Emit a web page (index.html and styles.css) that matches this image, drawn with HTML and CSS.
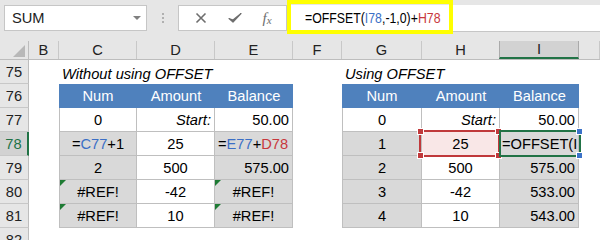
FILE: index.html
```html
<!DOCTYPE html>
<html lang="en">

<head>
    <meta charset="UTF-8" />
    <title>OFFSET running balance</title>
    <link rel="stylesheet" href="styles.css">
</head>

<body>
    <div class="topbar">
        <div class="namebox">
            <span>SUM</span>
            <span class="caret"></span>
        </div>
        <div class="grip"><i></i><i></i><i></i></div>
        <div class="fbtns">
            <svg width="12" height="12" viewBox="0 0 12 12"><path d="M1.5 1.5 L10.5 10.5 M10.5 1.5 L1.5 10.5" stroke="#6e6e6e" stroke-width="1.6" fill="none" /></svg>
            <svg width="14" height="12" viewBox="0 0 14 12"><path d="M1 6.5 L5 10 L13 1.5 L5 8 Z" fill="#6e6e6e" stroke="#6e6e6e" stroke-width="1.2" stroke-linejoin="round" /></svg>
            <span class="fx">f<sub>x</sub></span>
        </div>
        <div class="fbar">
            <span class="ftext">=OFFSET(<b class="ref-b">I78</b>,-1,0)+<b class="ref-r">H78</b></span>
            <div class="mark"></div>
        </div>
    </div>

    <div class="sheet">
        <div class="row head">
            <div class="corner"><span class="tri"></span></div>
            <div class="ch">B</div>
            <div class="ch">C</div>
            <div class="ch">D</div>
            <div class="ch">E</div>
            <div class="ch">F</div>
            <div class="ch">G</div>
            <div class="ch">H</div>
            <div class="ch sel">I</div>
            <div class="ch"></div>
        </div>

        <div class="row">
            <div class="rh">75</div>
            <div class="c"></div>
            <div class="c title">Without using OFFSET</div>
            <div class="c"></div>
            <div class="c"></div>
            <div class="c"></div>
            <div class="c title">Using OFFSET</div>
            <div class="c"></div>
            <div class="c"></div>
            <div class="c"></div>
        </div>

        <div class="row">
            <div class="rh">76</div>
            <div class="c"></div>
            <div class="c th">Num</div>
            <div class="c th">Amount</div>
            <div class="c th">Balance</div>
            <div class="c"></div>
            <div class="c th">Num</div>
            <div class="c th">Amount</div>
            <div class="c th">Balance</div>
            <div class="c"></div>
        </div>

        <div class="row">
            <div class="rh">77</div>
            <div class="c"></div>
            <div class="c t first mid">0</div>
            <div class="c t end"><em>Start:</em></div>
            <div class="c t end">50.00</div>
            <div class="c"></div>
            <div class="c t first mid">0</div>
            <div class="c t end"><em>Start:</em></div>
            <div class="c t end">50.00</div>
            <div class="c"></div>
        </div>

        <div class="row">
            <div class="rh active">78</div>
            <div class="c"></div>
            <div class="c t first g mid">=<span class="ref-b">C77</span>+1</div>
            <div class="c t mid">25</div>
            <div class="c t g">=<span class="ref-b">E77</span>+<span class="ref-r">D78</span></div>
            <div class="c"></div>
            <div class="c t first g mid">1</div>
            <div class="c t mid pick">25<span class="box-red"><i class="h tl"></i><i class="h tr"></i><i class="h bl"></i><i class="h br"></i></span></div>
            <div class="c t g editing">=OFFSET(I<span class="box-green"><i class="h tr"></i><i class="h br"></i></span></div>
            <div class="c"></div>
        </div>

        <div class="row">
            <div class="rh">79</div>
            <div class="c"></div>
            <div class="c t first g mid">2</div>
            <div class="c t mid">500</div>
            <div class="c t g end">575.00</div>
            <div class="c"></div>
            <div class="c t first g mid">2</div>
            <div class="c t mid">500</div>
            <div class="c t g end">575.00</div>
            <div class="c"></div>
        </div>

        <div class="row">
            <div class="rh">80</div>
            <div class="c"></div>
            <div class="c t first g mid err">#REF!</div>
            <div class="c t mid">-42</div>
            <div class="c t g mid err">#REF!</div>
            <div class="c"></div>
            <div class="c t first g mid">3</div>
            <div class="c t mid">-42</div>
            <div class="c t g end">533.00</div>
            <div class="c"></div>
        </div>

        <div class="row">
            <div class="rh">81</div>
            <div class="c"></div>
            <div class="c t first g mid err">#REF!</div>
            <div class="c t mid">10</div>
            <div class="c t g mid err">#REF!</div>
            <div class="c"></div>
            <div class="c t first g mid">4</div>
            <div class="c t mid">10</div>
            <div class="c t g end">543.00</div>
            <div class="c"></div>
        </div>

        <div class="row">
            <div class="rh">82</div>
        </div>
    </div>
</body>
</html>
```

FILE: styles.css
```css
body {
    margin: 0;
    width: 600px;
    height: 240px;
    overflow: hidden;
    font-family: "Liberation Sans", Arial, sans-serif;
    font-size: 14.67px;
    color: #000;
    background: #fff;
}

/* formula bar */

.topbar {
    display: flex;
    align-items: flex-start;
    height: 41px;
    padding-top: 5px;
    box-sizing: border-box;
    background: #e6e6e6;
}

.namebox {
    display: flex;
    align-items: center;
    justify-content: space-between;
    width: 143px;
    height: 26px;
    margin-left: 4px;
    padding: 0 5px 0 7px;
    box-sizing: border-box;
    background: #fff;
    border: 1px solid #c6c6c6;
    color: #222;
}

.caret {
    width: 0;
    height: 0;
    border-left: 4px solid transparent;
    border-right: 4px solid transparent;
    border-top: 4px solid #808080;
}

.grip {
    display: flex;
    flex-direction: column;
    gap: 2px;
    width: 31px;
    padding-top: 8px;
    align-items: center;
}

.grip i {
    width: 2px;
    height: 2px;
    background: #b0b0b0;
}

.fbtns {
    display: flex;
    align-items: center;
    justify-content: space-around;
    width: 109px;
    height: 26px;
    padding: 0 4px 0 6px;
    box-sizing: border-box;
    background: #fff;
    border: 1px solid #c6c6c6;
}

.fx {
    font-family: "Liberation Serif", serif;
    font-style: italic;
    font-size: 15px;
    color: #6e6e6e;
}

.fx sub {
    font-size: 11px;
    vertical-align: -1px;
}

.fbar {
    position: relative;
    flex: 1;
    height: 26px;
    margin-left: 2px;
    padding-left: 16px;
    background: #fff;
    border-bottom: 1px solid #c6c6c6;
    display: flex;
    align-items: center;
}

.ftext {
    display: inline-block;
    white-space: nowrap;
    transform: scaleX(0.84);
    transform-origin: left center;
}

.ftext b {
    font-weight: normal;
}

.mark {
    position: absolute;
    left: -2px;
    top: -5px;
    width: 166px;
    height: 34px;
    box-sizing: border-box;
    border: 4px solid #ffff00;
}

.ref-b {
    color: #3b6fc6;
}

.ref-r {
    color: #c8383c;
}

/* sheet grid */

.row {
    display: grid;
    grid-template-columns: 29px 30px 78px 78px 78px 49px 80px 78px 79px 21px;
    height: 24px;
}

.row.head {
    height: 18px;
    background: #e6e6e6;
    border-bottom: 1px solid #bdbdbd;
}

.corner {
    position: relative;
    border-right: 1px solid #bdbdbd;
}

.tri {
    position: absolute;
    right: 3px;
    bottom: 2px;
    width: 0;
    height: 0;
    border-left: 12px solid transparent;
    border-bottom: 12px solid #b8b8b8;
}

.ch {
    display: flex;
    align-items: center;
    justify-content: center;
    border-right: 1px solid #c8c8c8;
    color: #222;
}

.ch.sel {
    background: #d2d2d2;
    border-bottom: 2px solid #217346;
    border-right-color: #aaa;
    border-left: 1px solid #aaa;
    margin-left: -1px;
}

.rh {
    display: flex;
    align-items: center;
    justify-content: center;
    background: #e6e6e6;
    border-right: 1px solid #bdbdbd;
    border-bottom: 1px solid #c8c8c8;
    color: #222;
    box-sizing: border-box;
}

.rh.active {
    background: #d2d2d2;
    color: #217346;
    border-right: 2px solid #217346;
}

.c {
    display: flex;
    align-items: center;
    padding: 0 3px;
    white-space: nowrap;
    box-sizing: border-box;
}

.title {
    align-items: flex-end;
    padding-bottom: 2px;
    font-style: italic;
    overflow: visible;
}

.th {
    justify-content: center;
    background: #4f81bd;
    color: #fff;
}

.t {
    position: relative;
    border-right: 1px solid #bfbfbf;
    border-bottom: 1px solid #bfbfbf;
}

.t.first {
    border-left: 1px solid #bfbfbf;
}

.g {
    background: #d9d9d9;
}

.mid {
    justify-content: center;
}

.end {
    justify-content: flex-end;
}

.err::before {
    content: "";
    position: absolute;
    left: 0;
    top: 0;
    border-top: 6px solid #1e7b34;
    border-right: 6px solid transparent;
}

/* reference highlight while editing I78 */

.pick {
    background: #f9e7e7;
    z-index: 1;
}

.box-red,
.box-green {
    position: absolute;
    top: -2px;
    bottom: -2px;
    box-sizing: border-box;
    border: 2px solid #c0393b;
}

.box-red {
    left: -3px;
    right: -1px;
}

.box-green {
    left: -1px;
    right: -3px;
    border-color: #217346;
}

.editing {
    z-index: 2;
    padding-left: 2px;
}

.h {
    position: absolute;
    width: 5px;
    height: 5px;
    background: #c0393b;
    border: 1px solid #fff;
}

.box-green .h {
    background: #3b72c8;
}

.tl { left: -4px; top: -4px; }
.tr { right: -4px; top: -4px; }
.bl { left: -4px; bottom: -4px; }
.br { right: -4px; bottom: -4px; }
```
